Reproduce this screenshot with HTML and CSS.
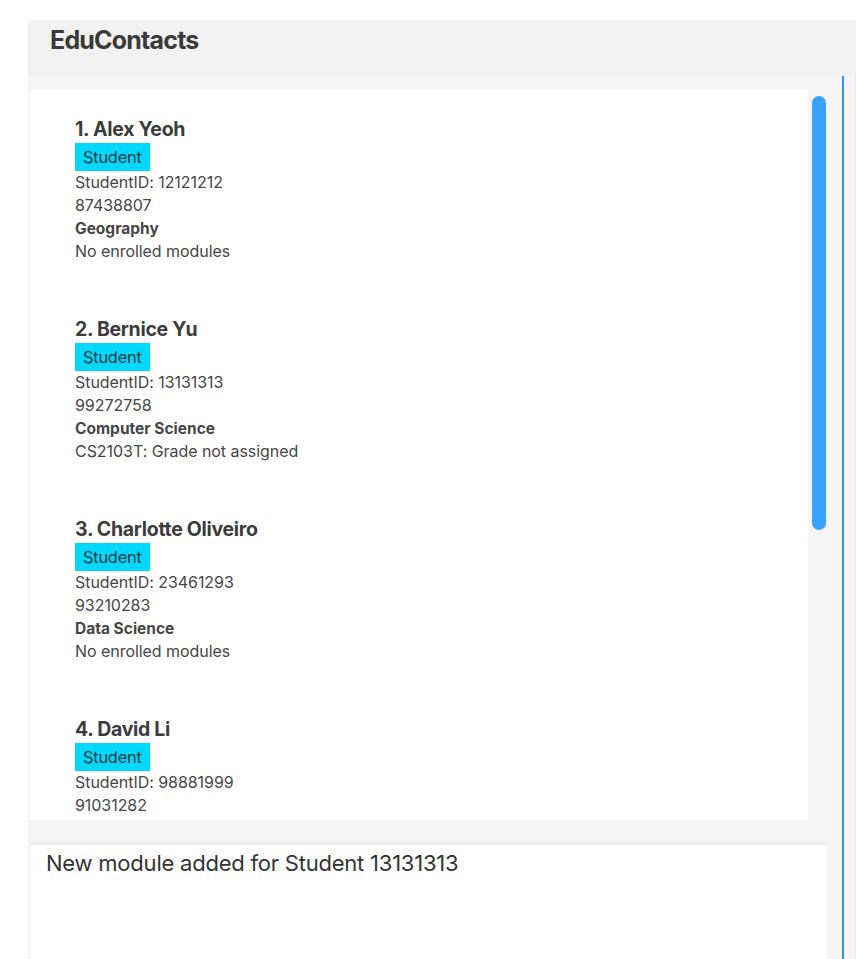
FILE: index.html
```html
<!DOCTYPE html>
<html>
<head>
<meta charset="utf-8">
<link rel="stylesheet" href="styles.css">
</head>
<body>
<div class="app">
  <header class="header"><h1 class="title">EduContacts</h1></header>
  <div class="main">
    <div class="left">
      <div class="list-area">
        <div class="list">
          <div class="card">
            <div class="name">1. Alex Yeoh</div>
            <span class="tag">Student</span>
            <div class="line">StudentID: 12121212</div>
            <div class="line">87438807</div>
            <div class="line bold">Geography</div>
            <div class="line">No enrolled modules</div>
          </div>
          <div class="card">
            <div class="name">2. Bernice Yu</div>
            <span class="tag">Student</span>
            <div class="line">StudentID: 13131313</div>
            <div class="line">99272758</div>
            <div class="line bold">Computer Science</div>
            <div class="line">CS2103T: Grade not assigned</div>
          </div>
          <div class="card">
            <div class="name">3. Charlotte Oliveiro</div>
            <span class="tag">Student</span>
            <div class="line">StudentID: 23461293</div>
            <div class="line">93210283</div>
            <div class="line bold">Data Science</div>
            <div class="line">No enrolled modules</div>
          </div>
          <div class="card">
            <div class="name">4. David Li</div>
            <span class="tag">Student</span>
            <div class="line">StudentID: 98881999</div>
            <div class="line">91031282</div>
          </div>
        </div>
        <div class="scroll"><div class="thumb"></div></div>
      </div>
      <div class="result">New module added for Student 13131313</div>
    </div>
    <div class="divider"></div>
    <div class="rightpad"></div>
  </div>
</div>
</body>
</html>
```
FILE: styles.css
```css
html, body {
  margin: 0;
  padding: 0;
  background: #ffffff;
  height: 100%;
  overflow: hidden;
}
body {
  font-family: Inter, "Noto Sans", sans-serif;
  color: #3e3e3e;
}
.app {
  margin: 20px 0 0 28px;
  width: 828px;
}
.header {
  height: 55px;
  background: #f1f1f1;
  display: flex;
  align-items: center;
  padding-left: 22px;
}
.title {
  margin: 0;
  font-size: 25px;
  font-weight: 700;
  letter-spacing: -0.8px;
  color: #3a3a3a;
  position: relative;
  top: -8px;
}
.main {
  display: flex;
  background: #f5f5f5;
  height: 884px;
}
.left {
  width: 812px;
  padding-left: 2px;
}
.list-area {
  display: flex;
  margin-top: 15px;
  height: 730px;
}
.list {
  width: 778px;
  background: #ffffff;
  overflow: hidden;
}
.scroll {
  width: 20px;
  padding: 6px 0 0 4px;
}
.thumb {
  width: 14px;
  height: 434px;
  border-radius: 7px;
  background: #38a3ff;
}
.card {
  height: 200px;
  padding: 27px 0 0 45px;
  box-sizing: border-box;
}
.name {
  font-size: 19.5px;
  font-weight: 700;
  line-height: 24px;
  letter-spacing: -0.3px;
  color: #3c3c3c;
}
.tag {
  display: inline-block;
  margin-top: 2px;
  height: 28px;
  line-height: 28px;
  padding: 0 8px;
  background: #00d8fd;
  color: #2e3b40;
  font-size: 16.5px;
  letter-spacing: -0.3px;
}
.line {
  font-size: 16px;
  line-height: 23px;
  letter-spacing: -0.05px;
  color: #464646;
}
.bold {
  font-weight: 700;
  font-size: 15.5px;
  letter-spacing: 0;
}
.result {
  margin: 22px 0 0 1px;
  width: 796px;
  height: 120px;
  background: #ffffff;
  border-top: 3px solid #ebebeb;
  box-sizing: border-box;
  padding: 4px 0 0 15px;
  font-size: 22px;
  line-height: 28px;
  letter-spacing: -0.22px;
  color: #333333;
}
.divider {
  width: 2px;
  margin-top: 1px;
  background: #2b95ff;
}
.rightpad {
  width: 11px;
  border-right: 1px solid #e9e9e9;
}
```
